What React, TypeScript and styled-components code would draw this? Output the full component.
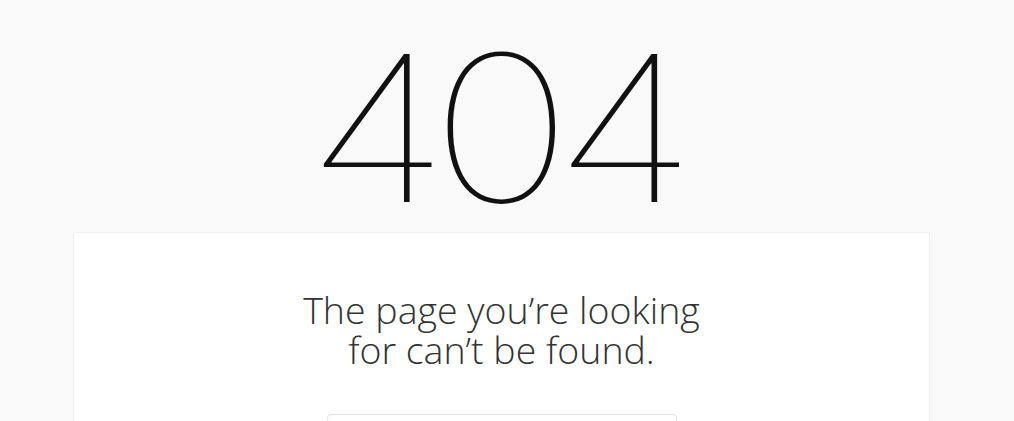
import React from 'react';
import styled, { createGlobalStyle } from 'styled-components';

const GlobalStyle = createGlobalStyle`
  html, body {
    margin: 0;
    padding: 0;
    background-color: #f9f9f9;
  }
  body {
    font-family: 'Open Sans', 'Liberation Sans', sans-serif;
    overflow: hidden;
  }
`;

const Page = styled.div`
  width: 1014px;
  height: 421px;
  overflow: hidden;
  display: flex;
  padding-left: 73px;
  box-sizing: border-box;
`;

const Column = styled.div`
  width: 857px;
  height: 100%;
  display: flex;
  flex-direction: column;
  align-items: center;
`;

const Code = styled.h1`
  margin: 26px 10px 0 0;
  height: 206px;
  font-family: Inter, 'Liberation Sans', sans-serif;
  font-weight: 100;
  font-size: 204px;
  line-height: 1;
  letter-spacing: -16px;
  text-indent: -8px;
  color: #111;
  transform: scaleX(1.18);
  flex-shrink: 0;
`;

const Card = styled.section`
  width: 100%;
  flex: 1;
  background-color: #ffffff;
  border: 1px solid #f0f0f0;
  border-bottom: none;
  box-sizing: border-box;
  display: flex;
  flex-direction: column;
  align-items: center;
  padding-top: 57px;
`;

const Message = styled.p`
  margin: 0;
  font-weight: 300;
  font-size: 37.5px;
  line-height: 40px;
  color: #333;
  text-align: center;
`;

const Search = styled.div`
  margin-top: 44px;
  width: 350px;
  height: 40px;
  flex-shrink: 0;
  border: 1px solid #e4e4e4;
  border-radius: 4px;
  box-sizing: border-box;
  background: #fff;
`;

const App: React.FC = () => {
  return (
    <>
      <GlobalStyle />
      <Page>
        <Column>
          <Code>404</Code>
          <Card>
            <Message>
              The page you’re looking
              <br />
              for can’t be found.
            </Message>
            <Search />
          </Card>
        </Column>
      </Page>
    </>
  );
};

export default App;
